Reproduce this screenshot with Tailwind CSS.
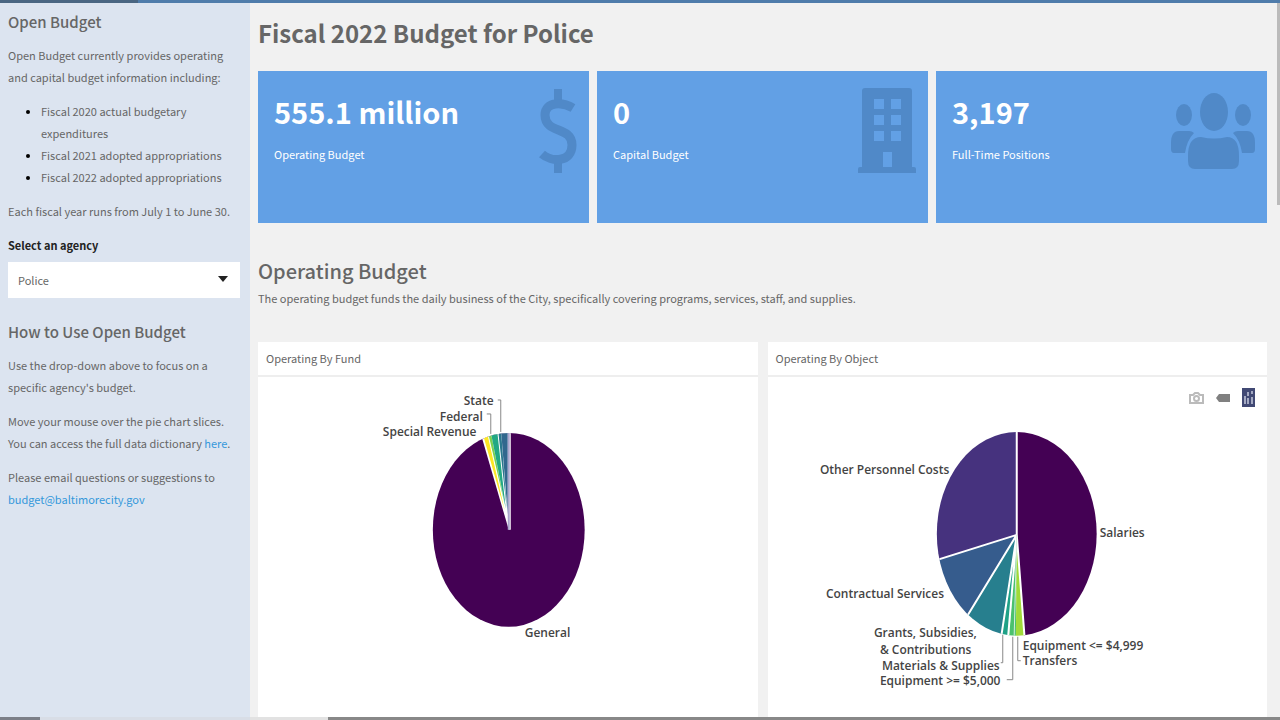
<!DOCTYPE html>
<html lang="en">
<head>
<meta charset="utf-8">
<meta name="viewport" content="width=device-width, initial-scale=1">
<title>Open Budget</title>
<script src="https://cdn.jsdelivr.net/npm/@tailwindcss/browser@4"></script>
</head>
<body class="flex min-h-screen flex-col bg-[#f1f1f1] font-['Noto_Sans_CJK_SC','Noto_Sans',sans-serif] text-[11px] leading-[22px] text-[#666]">
<div class="flex h-[3px]"><div class="w-[138px] bg-[#4a6682]"></div><div class="flex-1 bg-[#4f7cab]"></div></div>
<div class="flex flex-1">
  <aside class="w-[250px] shrink-0 bg-[#dce4f0] px-2 pt-2">
    <h2 class="text-[15px] leading-[22px] font-medium">Open Budget</h2>
    <p class="mt-[11px] whitespace-nowrap">Open Budget currently provides operating<br>and capital budget information including:</p>
    <ul class="mt-3 list-disc pl-[33px] whitespace-nowrap marker:text-black">
      <li>Fiscal 2020 actual budgetary<br>expenditures</li>
      <li>Fiscal 2021 adopted appropriations</li>
      <li>Fiscal 2022 adopted appropriations</li>
    </ul>
    <p class="mt-3 whitespace-nowrap">Each fiscal year runs from July 1 to June 30.</p>
    <label for="agency" class="mt-3 block font-bold text-[#222]">Select an agency</label>
    <div class="relative mt-[6px] mr-[2px]">
      <select id="agency" class="block h-9 w-full appearance-none bg-white px-[10px] text-[11px]"><option>Police</option></select>
      <svg class="pointer-events-none absolute top-[14px] right-3" width="10" height="6" viewBox="0 0 10 6"><path d="M0 0h10L5 6z" fill="#222"/></svg>
    </div>
    <h2 class="mt-[23px] text-[15px] leading-[22px] font-medium">How to Use Open Budget</h2>
    <p class="mt-[11px] whitespace-nowrap">Use the drop-down above to focus on a<br>specific agency's budget.</p>
    <p class="mt-3 whitespace-nowrap">Move your mouse over the pie chart slices.<br>You can access the full data dictionary <a href="#" class="text-[#3498db]">here</a>.</p>
    <p class="mt-3 whitespace-nowrap">Please email questions or suggestions to<br><a href="mailto:budget@baltimorecity.gov" class="text-[#3498db]">budget@baltimorecity.gov</a></p>
  </aside>
  <main class="flex min-w-0 flex-1 flex-col pr-[10px] pl-2">
    <h1 class="mt-3 text-2xl leading-9 font-bold">Fiscal 2022 Budget for Police</h1>
    <section class="mt-5 grid grid-cols-3 gap-2 text-white">
      <div class="flex h-[152px] justify-between bg-[#62a0e5] pt-[17px] pr-3 pl-4">
        <div><div class="text-[29px] leading-[46px] font-bold">555.1 million</div><div class="mt-[9px]">Operating Budget</div></div>
        <svg width="38" height="86" viewBox="0 0 38 86" fill="none" stroke="#5089c8" stroke-width="9"><path stroke-width="8" d="M19 1v15M19 70v15"/><path d="M34 20C24 14 6 13 6 27C6 46 33 38 33 57C33 75 12 74 3 66"/></svg>
      </div>
      <div class="flex h-[152px] justify-between bg-[#62a0e5] pt-[17px] pr-3 pl-4">
        <div><div class="text-[29px] leading-[46px] font-bold">0</div><div class="mt-[9px]">Capital Budget</div></div>
        <svg width="58" height="86" viewBox="0 0 58 86" fill="#5089c8" fill-rule="evenodd"><path d="M7 0h44q3 0 3 3v76h2q2 0 2 2v4H0v-4q0-2 2-2h2V3q0-3 3-3zM16 11v10h10V11zM33 11v10h10V11zM16 27v10h10V27zM33 27v10h10V27zM16 43v10h10V43zM33 43v10h10V43zM25 64v15h9V64z"/></svg>
      </div>
      <div class="flex h-[152px] justify-between bg-[#62a0e5] pt-[17px] pr-3 pl-4">
        <div><div class="text-[29px] leading-[46px] font-bold">3,197</div><div class="mt-[9px]">Full-Time Positions</div></div>
        <svg width="84" height="86" viewBox="0 0 84 86" fill="#5089c8"><ellipse cx="43" cy="24" rx="14" ry="19"/><ellipse cx="13" cy="27" rx="8" ry="11"/><ellipse cx="72" cy="27" rx="8" ry="11"/><path d="M8 43h10q3 0 5 2q-7 7-9 20H3q-3 0-3-4v-6q0-12 8-12zM76 43H67q-3 0-5 2q7 7 9 20h10q3 0 3-4v-6q0-12-8-12z"/><path d="M30 49q13 3 26 0q12 0 12 19v5q0 8-7 8H24q-7 0-7-8v-5q0-19 13-19z"/></svg>
      </div>
    </section>
    <h2 class="mt-8 text-xl leading-8 font-medium">Operating Budget</h2>
    <p>The operating budget funds the daily business of the City, specifically covering programs, services, staff, and supplies.</p>
    <section class="mt-[33px] grid flex-1 grid-cols-2 gap-[10px]">
      <article class="bg-white">
        <h3 class="border-b-2 border-[#eee] px-2 pt-[5px] pb-[6px]">Operating By Fund</h3>
        <svg class="block w-full" viewBox="0 0 500 339" font-family="Open Sans, sans-serif" font-size="12" font-weight="600" fill="#444" role="img" aria-label="Operating budget by fund">
          <clipPath id="fund"><ellipse cx="251" cy="153" rx="76" ry="97"/></clipPath>
          <g clip-path="url(#fund)">
            <path fill="#440154" d="M170 50h160v210H170z"/>
            <path fill="#fff" d="M251 153L221 50H253V153z"/>
            <path fill="#fde725" d="M247 134L223 50h5z"/>
            <path fill="#7ad151" d="M247 128L229 50h3z"/>
            <path fill="#22a884" d="M248 132L232 50h7z"/>
            <path fill="#2a788e" d="M249 132L240 50h3z"/>
            <path fill="#31688e" d="M250 138L243 50h7z"/>
            <path stroke="#aaa4cc" stroke-width="2" d="M251 50v103"/>
          </g>
          <path fill="none" stroke="#888" d="M229 37h4v20M240 23h3v32"/>
          <text x="206" y="28">State</text><text x="182" y="44">Federal</text><text x="125" y="59">Special Revenue</text><text x="267" y="260">General</text>
        </svg>
      </article>
      <article class="relative bg-white">
        <h3 class="border-b-2 border-[#eee] px-2 pt-[5px] pb-[6px]">Operating By Object</h3>
        <div class="absolute top-[46px] right-3 flex items-center gap-3">
          <button aria-label="Download plot" class="block"><svg width="15" height="14" viewBox="0 0 15 14" fill="none" stroke="#bbb" stroke-width="2"><path d="M1 4h3l2-2h3l2 2h3v8H1z"/><circle cx="7.5" cy="7.5" r="2.5"/></svg></button>
          <button aria-label="Show closest data on hover" class="block"><svg width="14" height="14" viewBox="0 0 14 14"><path d="M0 7l3-4h11v8H3z" fill="#808080"/></svg></button>
          <button aria-label="Produced with Plotly" class="block"><svg width="13" height="19" viewBox="0 0 13 19"><path fill="#414974" d="M0 0h13v19H0z"/><path stroke="#a4a9c2" stroke-width="2" d="M3 8v8M6 4v4M6 10v6M10 3v3M10 9v7"/></svg></button>
        </div>
        <svg class="block w-full" viewBox="0 0 500 339" font-family="Open Sans, sans-serif" font-size="12" font-weight="600" fill="#444" role="img" aria-label="Operating budget by object">
          <clipPath id="object"><ellipse cx="249" cy="157" rx="80" ry="102"/></clipPath>
          <g clip-path="url(#object)">
            <path fill="#440154" d="M249 50h90v220h-82L249 158z"/>
            <path fill="#46327e" d="M249 50v108L160 186V50z"/>
            <path fill="#365c8d" d="M249 158L160 186v90h17z"/>
            <path fill="#277f8e" d="M249 158L177 276h54z"/>
            <path fill="#1fa187" d="M249 158L231 276h9z"/>
            <path fill="#4ac16d" d="M249 158L240 276h8z"/>
            <path fill="#a0da39" d="M249 158L248 276h10z"/>
            <path fill="none" stroke="#fff" stroke-width="2" d="M249 50v108L160 186M249 158L177 276M249 158L231 276M249 158L239 276M249 158L258 276"/>
            <path fill="none" stroke="#d7eee0" d="M249 158L246 276"/>
          </g>
          <path fill="none" stroke="#888" d="M235 258v28h-2M245 260v43h-6M250 260v24h3"/>
          <text x="52" y="97">Other Personnel Costs</text><text x="332" y="160">Salaries</text><text x="58" y="221">Contractual Services</text>
          <text x="106" y="260">Grants, Subsidies,</text><text x="112" y="277">&amp; Contributions</text><text x="114" y="293">Materials &amp; Supplies</text><text x="112" y="308">Equipment &gt;= $5,000</text><text x="255" y="273">Equipment &lt;= $4,999</text><text x="255" y="288">Transfers</text>
        </svg>
      </article>
    </section>
  </main>
  <div class="w-[3px]"><div class="h-[202px] bg-[#bbb]"></div></div>
</div>
<div class="flex h-[3px] bg-[#888]"><div class="w-10 bg-[#7c7f88]"></div><div class="w-[210px] bg-[#d8dde6]"></div><div class="w-[78px] bg-[#e2e2e2]"></div></div>
</body>
</html>
